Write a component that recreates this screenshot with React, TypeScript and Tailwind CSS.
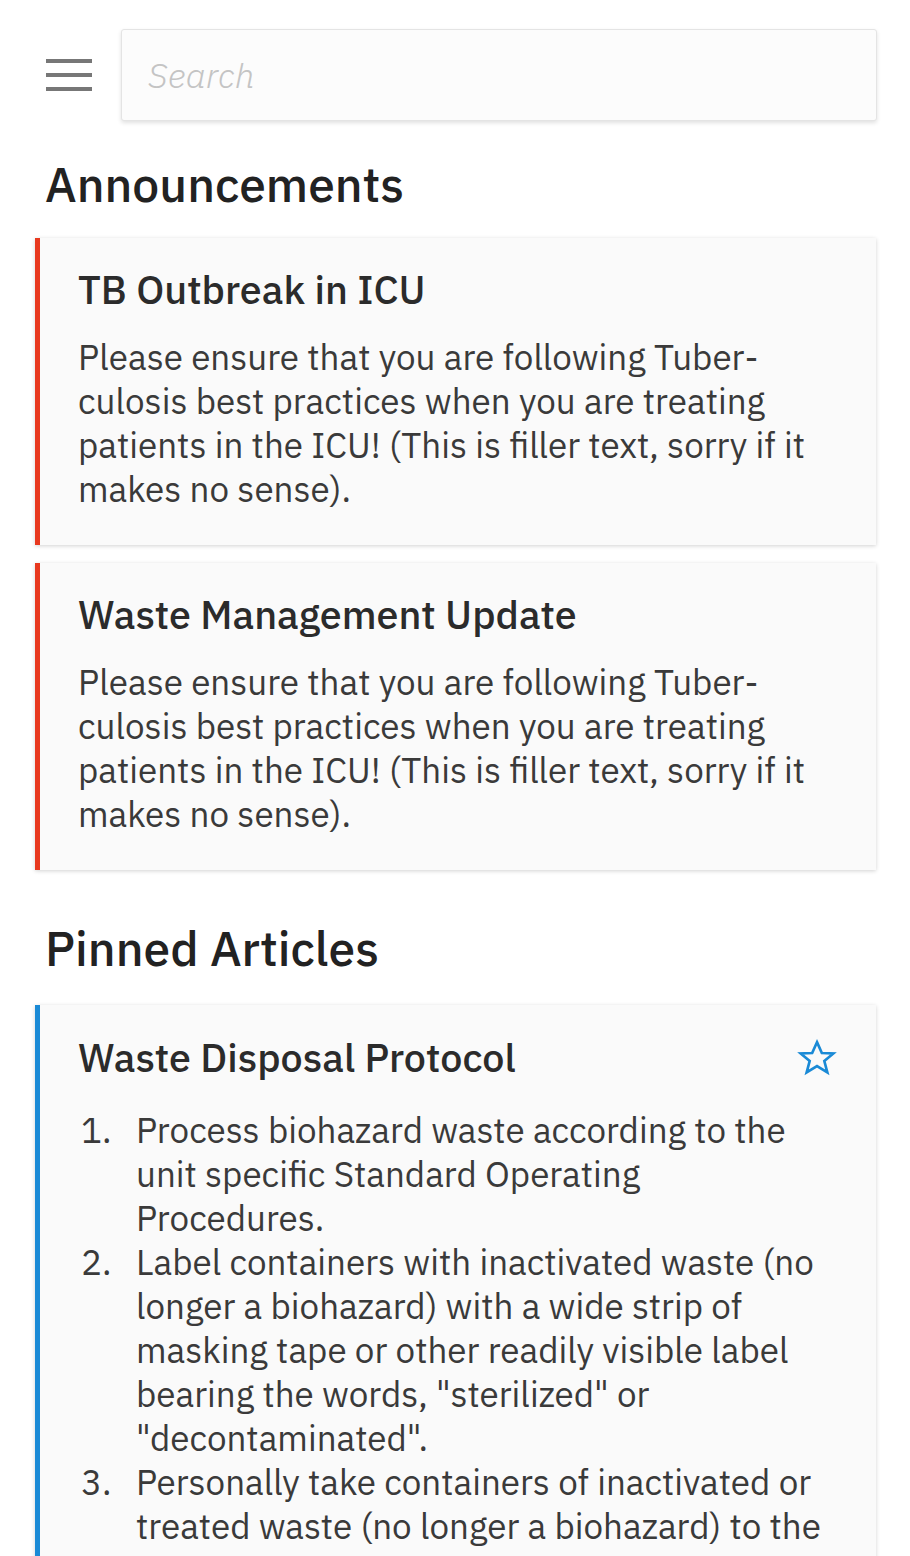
import React from 'react';

const font = { fontFamily: '"IBM Plex Sans", "Noto Sans", sans-serif' };

function Announcement({ title, body }: { title: string; body: string }) {
  return (
    <div className="bg-[#fafafa] border-l-[5px] border-[#e8391f] shadow-[0_1px_4px_rgba(0,0,0,0.18)] pl-[38px] pr-[40px] pt-[28px] pb-[34px]">
      <h3 className="text-[39.5px] leading-[48px] font-medium text-[#2b2b2b]">{title}</h3>
      <p className="mt-[21px] text-[35px] leading-[44px] text-[#3a3a3a]">{body}</p>
    </div>
  );
}

const body =
  'Please ensure that you are following Tuber\u00ADculosis best practices when you are treating patients in the ICU! (This is filler text, sorry if it makes no sense).';

const steps = [
  'Process biohazard waste according to the unit specific Standard Operating Procedures.',
  'Label containers with inactivated waste (no longer a biohazard) with a wide strip of masking tape or other readily visible label bearing the words, "sterilized" or "decontaminated".',
  'Personally take containers of inactivated or treated waste (no longer a biohazard) to the loading dock for disposal.',
];

export default function App() {
  return (
    <div className="w-[910px] h-[1556px] overflow-hidden bg-white" style={font}>
      {/* top bar */}
      <div className="flex items-center pt-[29px] pl-[46px] pr-[33px]">
        <div className="flex flex-col gap-[10px] w-[46px] shrink-0">
          <span className="h-[4px] bg-[#777]" />
          <span className="h-[4px] bg-[#777]" />
          <span className="h-[4px] bg-[#777]" />
        </div>
        <div className="ml-[29px] flex-1 h-[92px] bg-[#fcfcfc] border border-[#e4e4e4] rounded-[3px] shadow-[0_2px_4px_rgba(0,0,0,0.12)] flex items-center px-[26px]">
          <span className="text-[35px] italic font-light text-[#c4c4c4]">Search</span>
        </div>
      </div>

      <div className="pl-[35px] pr-[34px]">
        <h2 className="pl-[10px] mt-[35px] text-[48px] leading-[56px] font-medium text-[#222]">Announcements</h2>
        <div className="mt-[26px] flex flex-col gap-[18px]">
          <Announcement title="TB Outbreak in ICU" body={body} />
          <Announcement title="Waste Management Update" body={body} />
        </div>

        <h2 className="pl-[10px] mt-[50px] text-[48px] leading-[56px] font-medium text-[#222]">Pinned Articles</h2>
        <div className="mt-[29px] bg-[#fafafa] border-l-[5px] border-[#1a8ad6] shadow-[0_1px_4px_rgba(0,0,0,0.18)] pl-[38px] pr-[38px] pt-[29px] pb-[34px]">
          <div className="flex items-center justify-between">
            <h3 className="text-[39.5px] leading-[48px] font-medium text-[#2b2b2b]">Waste Disposal Protocol</h3>
            <svg width="42" height="40" viewBox="0 0 24 24" fill="none" stroke="#1a8ad6" strokeWidth="1.6" strokeLinejoin="miter">
              <polygon points="12,2.5 14.9,9 21.8,9.3 16.4,13.8 18.2,20.6 12,16.8 5.8,20.6 7.6,13.8 2.2,9.3 9.1,9" />
            </svg>
          </div>
          <ol className="mt-[26px] pr-[12px] text-[35px] leading-[44px] text-[#3a3a3a]">
            {steps.map((s, i) => (
              <li key={i} className="flex">
                <span className="w-[58px] shrink-0 pl-[3px]">{i + 1}.</span>
                <span>{s}</span>
              </li>
            ))}
          </ol>
        </div>
      </div>
    </div>
  );
}
